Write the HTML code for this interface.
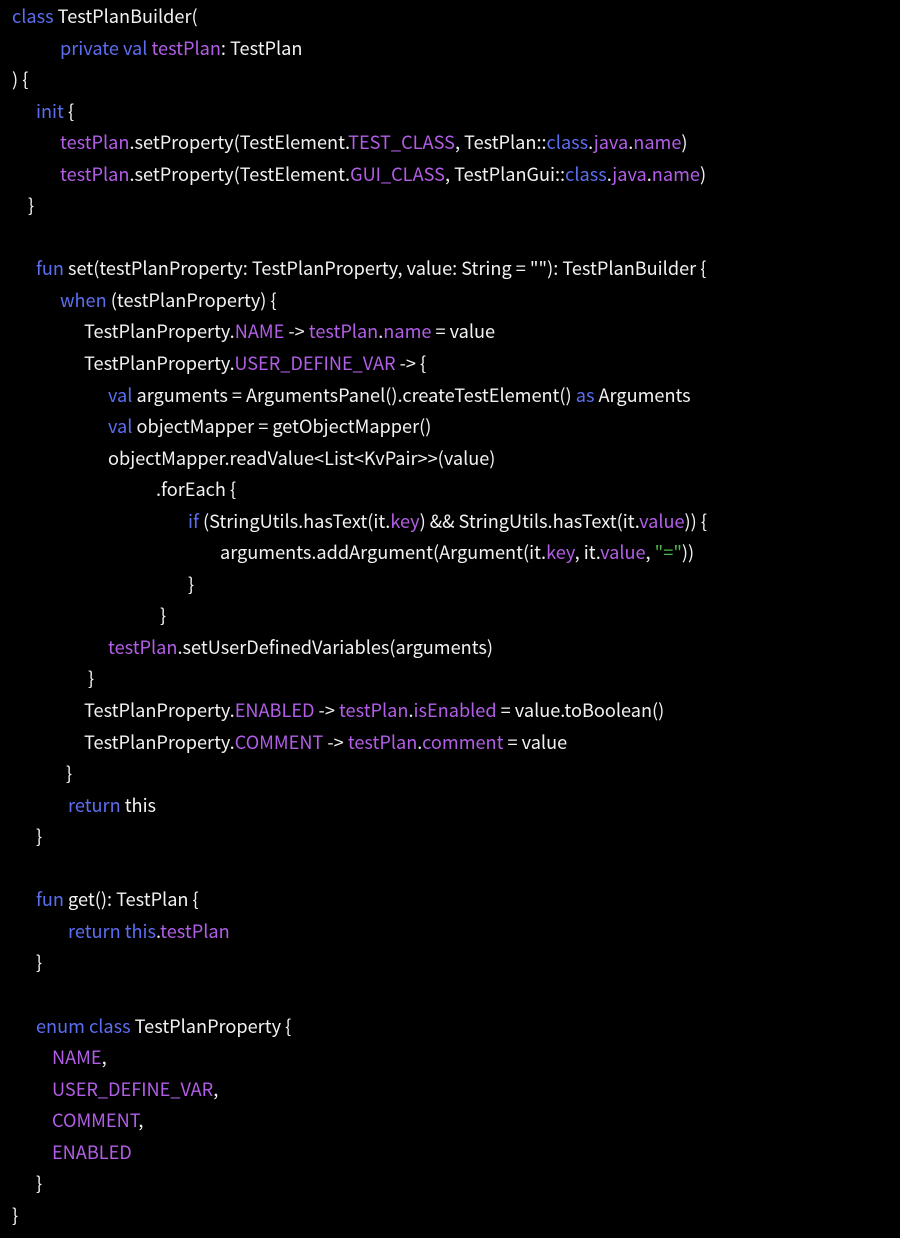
<!DOCTYPE html>
<html><head><meta charset="utf-8"><style>
html,body{margin:0;padding:0;background:#000;width:900px;height:1238px;overflow:hidden}
body{font-family:"Noto Sans CJK SC","Liberation Sans",sans-serif;font-size:18.15px;color:#f2f2f2}
.l{height:31.56px;line-height:31.56px;white-space:pre;position:relative;top:1px}
.k{color:#5b6ef0}.p{color:#b25ee6}.s{color:#4cb84c}
</style></head><body>
<div class="l" style="padding-left:12px"><span class="k">class</span> TestPlanBuilder(</div>
<div class="l" style="padding-left:60px"><span class="k">private val</span> <span class="p">testPlan</span>: TestPlan</div>
<div class="l" style="padding-left:12px">) {</div>
<div class="l" style="padding-left:36px"><span class="k">init</span> {</div>
<div class="l" style="padding-left:60px"><span class="p">testPlan</span>.setProperty(TestElement.<span class="p">TEST_CLASS</span>, TestPlan::<span class="k">class</span>.<span class="p">java</span>.<span class="p">name</span>)</div>
<div class="l" style="padding-left:60px"><span class="p">testPlan</span>.setProperty(TestElement.<span class="p">GUI_CLASS</span>, TestPlanGui::<span class="k">class</span>.<span class="p">java</span>.<span class="p">name</span>)</div>
<div class="l" style="padding-left:28px">}</div>
<div class="l"></div>
<div class="l" style="padding-left:36px"><span class="k">fun</span> set(testPlanProperty: TestPlanProperty, value: String = ""): TestPlanBuilder {</div>
<div class="l" style="padding-left:60px"><span class="k">when</span> (testPlanProperty) {</div>
<div class="l" style="padding-left:84px">TestPlanProperty.<span class="p">NAME</span> -&gt; <span class="p">testPlan</span>.<span class="p">name</span> = value</div>
<div class="l" style="padding-left:84px">TestPlanProperty.<span class="p">USER_DEFINE_VAR</span> -&gt; {</div>
<div class="l" style="padding-left:108px"><span class="k">val</span> arguments = ArgumentsPanel().createTestElement() <span class="k">as</span> Arguments</div>
<div class="l" style="padding-left:108px"><span class="k">val</span> objectMapper = getObjectMapper()</div>
<div class="l" style="padding-left:108px">objectMapper.readValue&lt;List&lt;KvPair&gt;&gt;(value)</div>
<div class="l" style="padding-left:156px">.forEach {</div>
<div class="l" style="padding-left:188px"><span class="k">if</span> (StringUtils.hasText(it.<span class="p">key</span>) &amp;&amp; StringUtils.hasText(it.<span class="p">value</span>)) {</div>
<div class="l" style="padding-left:220px">arguments.addArgument(Argument(it.<span class="p">key</span>, it.<span class="p">value</span>, <span class="s">"="</span>))</div>
<div class="l" style="padding-left:188px">}</div>
<div class="l" style="padding-left:160px">}</div>
<div class="l" style="padding-left:108px"><span class="p">testPlan</span>.setUserDefinedVariables(arguments)</div>
<div class="l" style="padding-left:88px">}</div>
<div class="l" style="padding-left:84px">TestPlanProperty.<span class="p">ENABLED</span> -&gt; <span class="p">testPlan</span>.<span class="p">isEnabled</span> = value.toBoolean()</div>
<div class="l" style="padding-left:84px">TestPlanProperty.<span class="p">COMMENT</span> -&gt; <span class="p">testPlan</span>.<span class="p">comment</span> = value</div>
<div class="l" style="padding-left:66px">}</div>
<div class="l" style="padding-left:68px"><span class="k">return</span> this</div>
<div class="l" style="padding-left:36px">}</div>
<div class="l"></div>
<div class="l" style="padding-left:36px"><span class="k">fun</span> get(): TestPlan {</div>
<div class="l" style="padding-left:68px"><span class="k">return this</span>.<span class="p">testPlan</span></div>
<div class="l" style="padding-left:36px">}</div>
<div class="l"></div>
<div class="l" style="padding-left:36px"><span class="k">enum class</span> TestPlanProperty {</div>
<div class="l" style="padding-left:52px"><span class="p">NAME</span>,</div>
<div class="l" style="padding-left:52px"><span class="p">USER_DEFINE_VAR</span>,</div>
<div class="l" style="padding-left:52px"><span class="p">COMMENT</span>,</div>
<div class="l" style="padding-left:52px"><span class="p">ENABLED</span></div>
<div class="l" style="padding-left:36px">}</div>
<div class="l" style="padding-left:12px">}</div>
</body></html>
